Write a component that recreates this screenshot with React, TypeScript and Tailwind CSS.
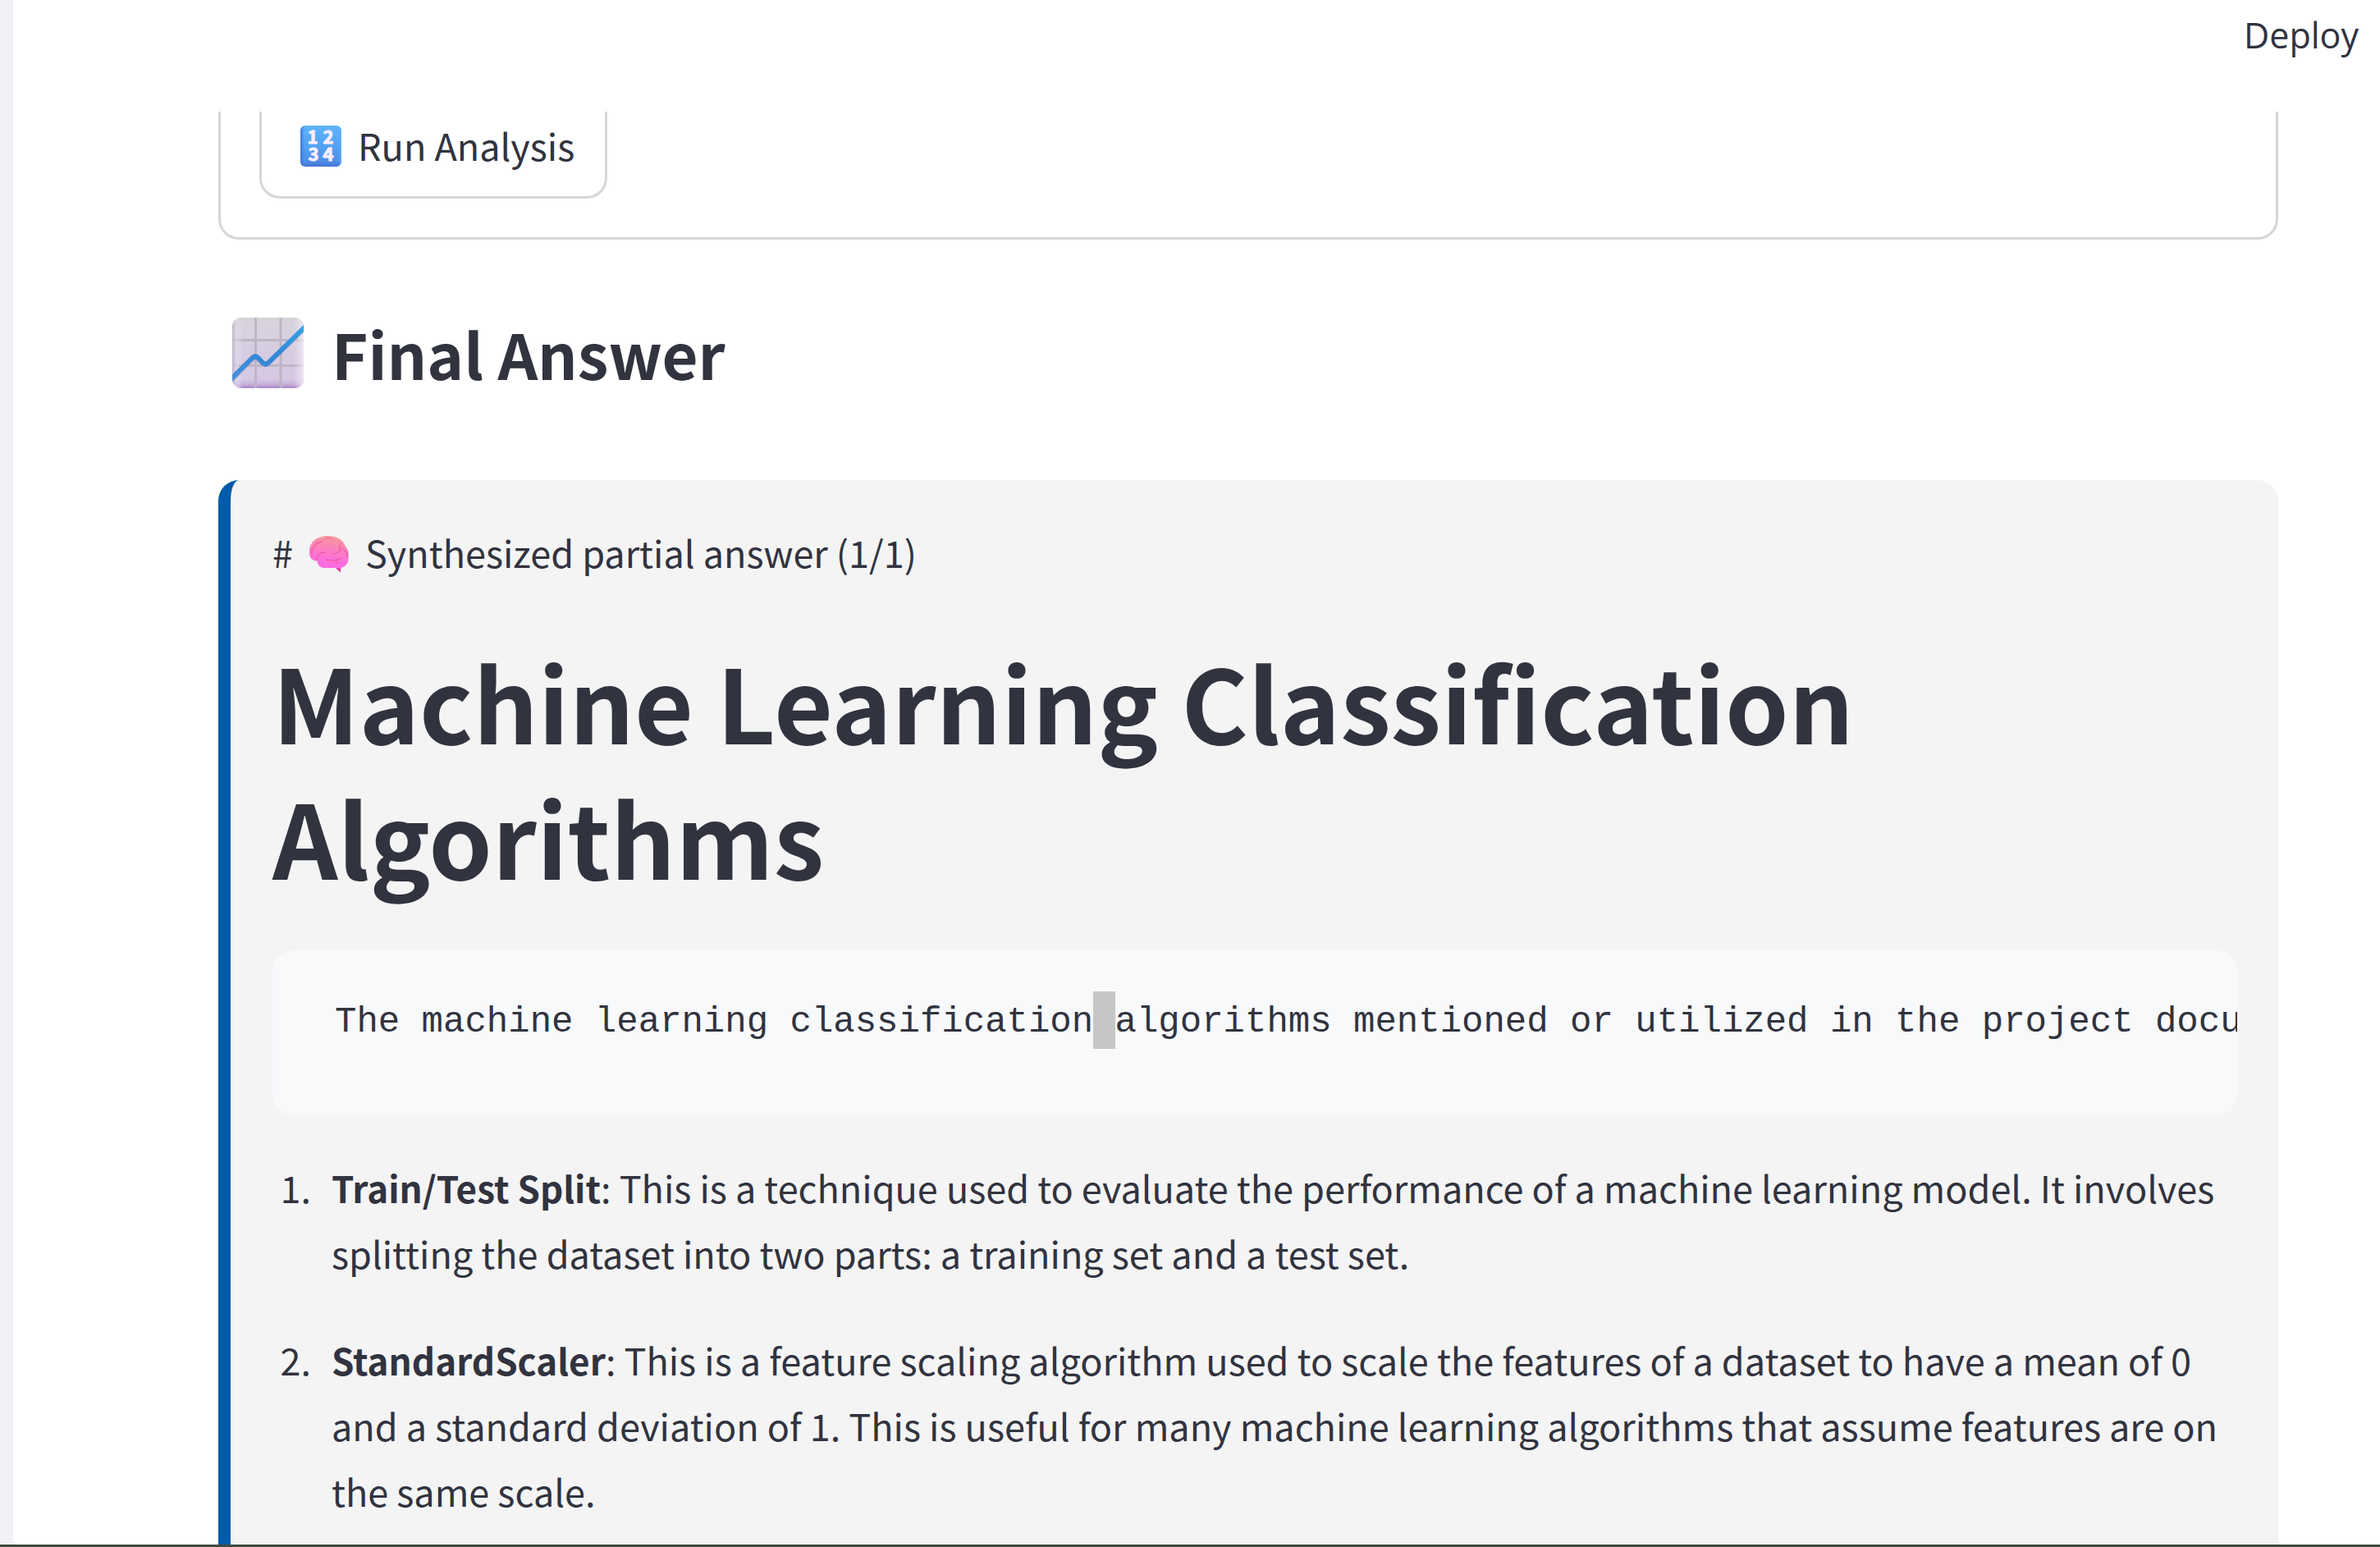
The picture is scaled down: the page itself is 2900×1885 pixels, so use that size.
import React from "react";

function NumbersIcon() {
  return (
    <svg viewBox="0 0 50 50" className="size-[50px] shrink-0 overflow-visible" aria-hidden="true">
      <defs>
        <linearGradient id="num-bg" x1="0" y1="0" x2="0" y2="1">
          <stop offset="0" stopColor="#5fb4fb" />
          <stop offset="0.5" stopColor="#51a2f2" />
          <stop offset="0.86" stopColor="#4f8fe9" />
          <stop offset="1" stopColor="#4272d4" />
        </linearGradient>
        <linearGradient id="num-side" x1="0" y1="0" x2="1" y2="0">
          <stop offset="0" stopColor="#3f78dc" />
          <stop offset="0.1" stopColor="#3f78dc" stopOpacity="0" />
          <stop offset="0.92" stopColor="#6db8ff" stopOpacity="0" />
          <stop offset="1" stopColor="#6db8ff" stopOpacity="0.6" />
        </linearGradient>
      </defs>
      <rect y="1" width="50" height="50" rx="6" fill="url(#num-bg)" />
      <rect y="1" width="50" height="50" rx="6" fill="url(#num-side)" />
      <g
        fill="#fdeefe"
        stroke="#fdeefe"
        strokeWidth="1"
        strokeLinejoin="round"
        textAnchor="middle"
        className="font-['Noto_Sans_CJK_SC',sans-serif] text-[22px] font-bold"
      >
        <text x="15" y="23">1</text>
        <text x="34" y="23">2</text>
        <text x="16" y="44">3</text>
        <text x="34" y="44">4</text>
      </g>
    </svg>
  );
}

function ChartIcon() {
  return (
    <svg viewBox="0 0 87 86" className="h-[86px] w-[87px] shrink-0" aria-hidden="true">
      <defs>
        <linearGradient id="chart-bg" x1="0" y1="0" x2="0" y2="1">
          <stop offset="0" stopColor="#d3d1d5" />
          <stop offset="0.1" stopColor="#d8d3df" />
          <stop offset="0.55" stopColor="#d6cbe1" />
          <stop offset="0.88" stopColor="#d6c8e4" />
          <stop offset="0.95" stopColor="#c4acd8" />
          <stop offset="1" stopColor="#aa85c6" />
        </linearGradient>
        <linearGradient id="chart-side" x1="0" y1="0" x2="1" y2="0">
          <stop offset="0" stopColor="#b9b0c4" stopOpacity="0.8" />
          <stop offset="0.06" stopColor="#e2dbea" stopOpacity="0.7" />
          <stop offset="0.16" stopColor="#e2dbea" stopOpacity="0" />
          <stop offset="0.86" stopColor="#efe8f3" stopOpacity="0" />
          <stop offset="1" stopColor="#f1e9f5" stopOpacity="0.85" />
        </linearGradient>
        <linearGradient id="chart-line" x1="0" y1="1" x2="1" y2="0">
          <stop offset="0" stopColor="#4a92dd" />
          <stop offset="0.5" stopColor="#2f87d6" />
          <stop offset="1" stopColor="#33a4e8" />
        </linearGradient>
        <clipPath id="chart-clip">
          <rect width="87" height="86" rx="11" />
        </clipPath>
      </defs>
      <g clipPath="url(#chart-clip)">
        <rect width="87" height="86" fill="url(#chart-bg)" />
        <path d="M28.500 0V86M59 0V86M0 27.500H87M0 58.500H87" stroke="#bdb5c4" strokeWidth="3" />
        <rect width="87" height="86" fill="url(#chart-side)" />
        <path
          d="M-4 79L24 50.500Q28 46.500 32 50.500L36.500 55Q40.500 59 44.500 55L92 9"
          fill="none"
          stroke="#8e86b4"
          strokeOpacity="0.5"
          strokeWidth="6"
        />
        <path
          d="M-4 77.500L24 49.500Q28 45.500 32 49.500L36.500 54.500Q40.500 58.500 44.500 54.500L92 8"
          fill="none"
          stroke="url(#chart-line)"
          strokeWidth="6"
        />
      </g>
    </svg>
  );
}

function BrainIcon() {
  return (
    <svg
      viewBox="0 0 50 46"
      className="mx-[19px] inline-block h-[46px] w-[50px] align-[-6px]"
      aria-hidden="true"
    >
      <defs>
        <linearGradient id="brain-bg" x1="0.6" y1="0" x2="0.45" y2="1">
          <stop offset="0" stopColor="#fb9a9c" />
          <stop offset="0.35" stopColor="#fb83b8" />
          <stop offset="0.7" stopColor="#fb72d6" />
          <stop offset="1" stopColor="#fd68e4" />
        </linearGradient>
      </defs>
      <path d="M31 38L38 45Q39 45.500 39 44L39.500 36Z" fill="#f13fb4" />
      <path
        d="M1 19C1 9 10 1 24 1C34 1 41 5 44 12C48 17 50 23 48.500 28C49 34 45 39.500 38 40H19C14 40 11 36 10.500 31.500C5 31.500 0 28 1 19Z"
        fill="url(#brain-bg)"
      />
      <g fill="none" stroke="#e8488f" strokeOpacity="0.6" strokeWidth="1.300" strokeLinecap="round">
        <path d="M4 22C4 15 9 9 17 8" />
        <path d="M10 30C11 23 14 21 20 21" />
        <path d="M20 5C22 3 25 3 28 5" />
        <path d="M40 10C36 13 37 17 39 19C35 22 33 23 30 23" />
        <path d="M39 15C44 18 47 21 47 26" />
        <path d="M22 30C28 31 35 32 39 28M33 31C34 33 34 34 36 34" />
      </g>
    </svg>
  );
}

const items = [
  {
    term: "Train/Test Split",
    text: "This is a technique used to evaluate the performance of a machine learning model. It involves splitting the dataset into two parts: a training set and a test set.",
  },
  {
    term: "StandardScaler",
    text: "This is a feature scaling algorithm used to scale the features of a dataset to have a mean of 0 and a standard deviation of 1. This is useful for many machine learning algorithms that assume features are on the same scale.",
  },
];

export default function App() {
  return (
    <div className="flex h-screen flex-col overflow-hidden bg-white font-['Noto_Sans_CJK_SC',sans-serif] text-[45px] leading-[80px] text-[#31333f]">
      <div className="flex min-h-0 flex-1">
        <aside className="w-4 shrink-0 bg-[#f0f2f6]" />
        <div className="flex min-w-0 flex-1 flex-col">
          <header className="flex h-[136px] shrink-0 items-start justify-end px-[26px] pt-3">
            <button
              type="button"
              className="font-['Open_Sans',sans-serif] text-[43px] leading-[62px]"
            >
              Deploy
            </button>
          </header>
          <main className="min-h-0 flex-1 overflow-hidden pr-[124px] pl-[250px]">
            <form
              className="-mt-[72px] rounded-[25px] border-3 border-[#d5d6d8] p-[47px]"
              onSubmit={(e) => e.preventDefault()}
            >
              <button
                type="submit"
                className="flex h-[128px] items-center gap-5 rounded-[25px] border-3 border-[#d5d6d8] pr-[37px] pb-[2px] pl-[47px]"
              >
                <NumbersIcon />
                Run Analysis
              </button>
            </form>

            <h2 className="mt-[82px] flex items-center gap-[34px] pl-[17px] text-[76px] leading-[112px] font-bold">
              <ChartIcon />
              Final Answer
            </h2>

            <section className="mt-[99px] rounded-[25px] border-l-15 border-[#005baa] bg-[#f4f4f4] py-12 pr-[50px] pl-[51px]">
              <p>
                #<BrainIcon />
                Synthesized partial answer (1/1)
              </p>
              <h1 className="mt-[58px] text-[124px] leading-[165px] font-bold">
                Machine Learning Classification Algorithms
              </h1>
              <pre className="mt-[57px] h-[201px] overflow-hidden rounded-[25px] bg-[#f8f9fb] px-[76px] pt-[50px] font-['Liberation_Mono',monospace] text-[44px] leading-[74px]">
                <code className="font-[inherit]">
                  The machine learning classification
                  <span className="inline-block h-[70px] bg-[#c5c7c6] align-top"> </span>
                  algorithms mentioned or utilized in the project documents are:
                </code>
              </pre>
              <ol className="mt-12 list-decimal space-y-[50px] pl-[57px]">
                {items.map((item) => (
                  <li key={item.term} className="pl-[15px]">
                    <strong className="text-[44px] font-bold">{item.term}</strong>: {item.text}
                  </li>
                ))}
              </ol>
            </section>
          </main>
        </div>
      </div>
      <footer className="h-[3px] shrink-0 bg-[#3f4a3e]" />
    </div>
  );
}
